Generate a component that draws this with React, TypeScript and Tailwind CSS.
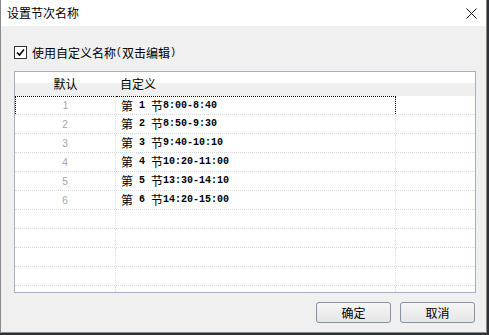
import React from "react";

const CJK = '"Noto Sans CJK SC", "Noto Sans", sans-serif';
const MONO = '"Liberation Mono", "DejaVu Sans Mono", monospace';

function C({ children }: { children: React.ReactNode }) {
  return <span className="text-[12px]" style={{ fontFamily: CJK }}>{children}</span>;
}
function M({ children }: { children: React.ReactNode }) {
  return <span className="text-[10px] whitespace-pre font-bold" style={{ fontFamily: MONO }}>{children}</span>;
}

const rows = [
  ["1", "8:00-8:40"],
  ["2", "8:50-9:30"],
  ["3", "9:40-10:10"],
  ["4", "10:20-11:00"],
  ["5", "13:30-14:10"],
  ["6", "14:20-15:00"],
];

export default function App() {
  const empty = Array.from({ length: 4 });
  return (
    <div className="w-[489px] h-[335px] bg-[#2d3034] overflow-hidden">
      <div className="w-[487px] h-[333px] flex flex-col bg-[#f0f0f0] border-l border-r border-b border-[#8a8a8a]">
        <div className="h-[26px] bg-white flex items-center justify-between pl-[6px] pr-[9px]">
          <span className="text-[12px] text-black leading-none" style={{ fontFamily: CJK }}>设置节次名称</span>
          <svg width="11" height="11" viewBox="0 0 11 11" className="mt-[1px]">
            <path d="M0.5 0.5 L10.5 10.5 M10.5 0.5 L0.5 10.5" stroke="#111" strokeWidth="1" />
          </svg>
        </div>
        <div className="flex-1 flex flex-col pl-[13px] pr-[10px]">
          <div className="mt-[20px] h-[13px] flex items-center">
            <div className="w-[13px] h-[13px] border border-[#333] bg-white flex items-center justify-center">
              <svg width="9" height="9" viewBox="0 0 9 9">
                <path d="M1 4.5 L3.5 7 L8 1.5" stroke="#000" strokeWidth="1.6" fill="none" />
              </svg>
            </div>
            <div className="ml-[5px] flex items-center text-black leading-none">
              <C>使用自定义名称</C>
              <span className="text-[10px]" style={{ fontFamily: MONO }}>(</span>
              <C>双击编辑</C>
              <span className="text-[10px]" style={{ fontFamily: MONO }}>)</span>
            </div>
          </div>
          <div className="mt-[12px] w-[462px] h-[222px] border border-[#a3afc6] bg-white flex flex-col">
            <div className="h-[24px] flex bg-[linear-gradient(to_bottom,#ffffff_45%,#efefef_45%)]">
              <div className="w-[101px] flex items-center justify-center text-black" style={{ fontFamily: CJK }}>
                <span className="text-[12px]">默认</span>
              </div>
              <div className="w-[280px] flex items-center pl-[4px] text-black" style={{ fontFamily: CJK }}>
                <span className="text-[12px]">自定义</span>
              </div>
              <div className="flex-1" />
            </div>
            {rows.map(([n, t], i) => (
              <div key={n} className="h-[19px] flex border-b border-dotted border-[#d8dbe4]">
                <div
                  className={`w-[101px] flex items-center justify-center border-r border-dotted text-[10px] text-[#a6a6a6] ${i === 0 ? "border-t border-l border-t-black border-l-black border-r-[#dcdce4]" : "border-[#dcdce4]"}`}
                  style={{ fontFamily: '"Liberation Sans", sans-serif' }}
                >
                  {n}
                </div>
                <div className={`w-[280px] flex items-center pl-[5px] text-black leading-none border-r border-dotted ${i === 0 ? "border-t border-black" : "border-[#dcdce4]"}`}>
                  <C>第</C>
                  <M>{` ${n} `}</M>
                  <C>节</C>
                  <M>{t}</M>
                </div>
                <div className="flex-1" />
              </div>
            ))}
            {empty.map((_, i) => (
              <div key={i} className="h-[19px] flex border-b border-dotted border-[#d8dbe4]">
                <div className="w-[101px] border-r border-dotted border-[#dcdce4]" />
                <div className="w-[280px] border-r border-dotted border-[#dcdce4]" />
                <div className="flex-1" />
              </div>
            ))}
            <div className="flex-1 flex">
              <div className="w-[101px] border-r border-dotted border-[#dcdce4]" />
              <div className="w-[280px] border-r border-dotted border-[#dcdce4]" />
            </div>
          </div>
          <div className="mt-[9px] flex justify-end gap-[9px] pr-[1px]">
            <button className="w-[75px] h-[21px] rounded-[3px] border border-[#8393a8] bg-[linear-gradient(to_bottom,#f6f6f6,#e6e6e6)] flex items-center justify-center text-black">
              <C>确定</C>
            </button>
            <button className="w-[75px] h-[21px] rounded-[3px] border border-[#8393a8] bg-[linear-gradient(to_bottom,#f6f6f6,#e6e6e6)] flex items-center justify-center text-black">
              <C>取消</C>
            </button>
          </div>
        </div>
      </div>
    </div>
  );
}
